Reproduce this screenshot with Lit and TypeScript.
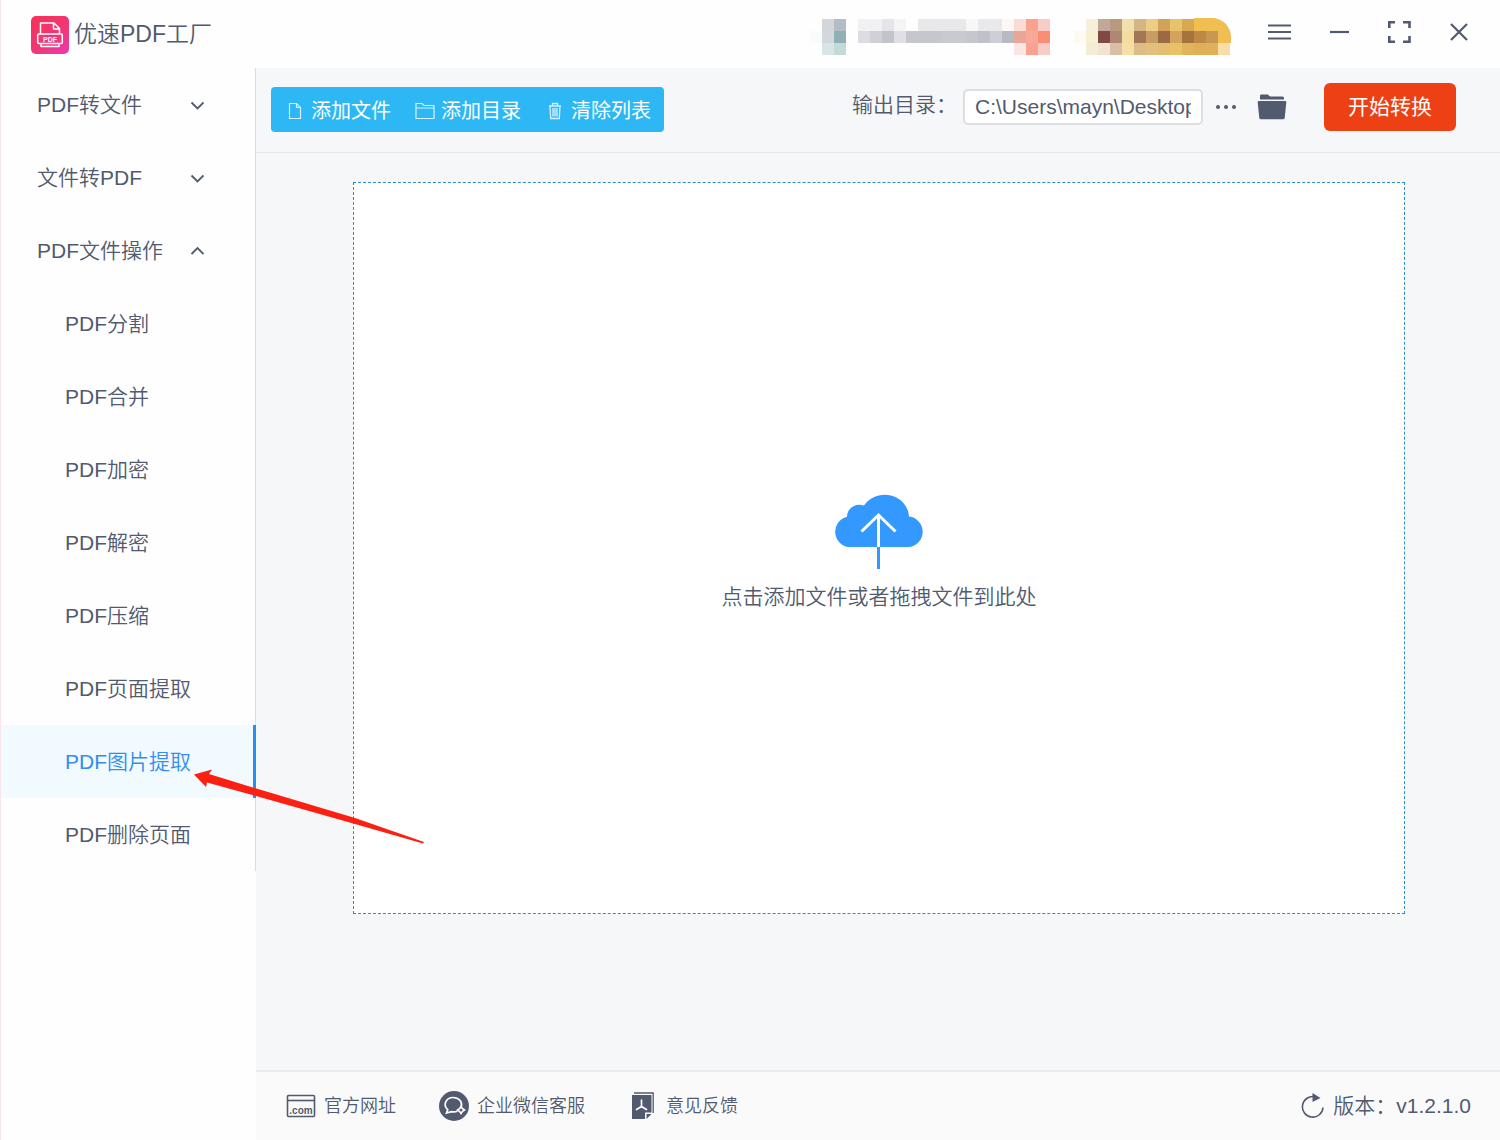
import { LitElement, html, css, svg } from "lit";
import { customElement, state } from "lit/decorators.js";
import { classMap } from "lit/directives/class-map.js";

type Cell = [number, number, number, string];

// Account strip: [x, row, width, colour], each row is 12px tall.
const cells: Cell[] = [
  [0, 1, 12, "#fafbfc"],
  [12, 0, 12, "#d2d7db"], [24, 0, 12, "#b3bec4"],
  [12, 1, 12, "#d3d8dc"], [24, 1, 12, "#90b0b6"],
  [12, 2, 12, "#d6e5e5"], [24, 2, 12, "#c3dad9"],
  [48, 0, 24, "#f1f1f4"], [72, 0, 12, "#e5e5e9"], [84, 0, 12, "#f4f4f6"],
  [108, 0, 48, "#e8e8eb"], [156, 0, 12, "#f7f7f8"], [168, 0, 24, "#e9e9ec"],
  [192, 0, 12, "#fcf8f8"], [204, 0, 12, "#f9dcd6"], [216, 0, 12, "#f9a28d"], [228, 0, 12, "#f8cdc7"],
  [48, 1, 12, "#dcdce1"], [60, 1, 12, "#d0d1d7"], [72, 1, 12, "#c2c4cb"], [84, 1, 12, "#dfdfe4"],
  [96, 1, 36, "#c6c7cd"], [132, 1, 24, "#c9cad0"], [156, 1, 12, "#c6c7cd"], [168, 1, 12, "#c1c2c9"],
  [180, 1, 12, "#cdced6"], [192, 1, 12, "#b8bac3"], [204, 1, 12, "#eaa59a"], [216, 1, 12, "#f7a999"],
  [228, 1, 12, "#f98d75"],
  [204, 2, 12, "#fae6e3"], [216, 2, 12, "#f9a292"], [228, 2, 12, "#f7cbc6"],
  [264, 1, 12, "#fdfaf3"],
  [276, 0, 12, "#f7efdb"], [276, 1, 12, "#f8efd5"], [276, 2, 12, "#f5ecd8"],
  [288, 0, 12, "#c2a898"], [288, 1, 12, "#7d4a44"], [288, 2, 12, "#f2e3d0"],
  [300, 0, 12, "#bb9880"], [300, 1, 12, "#b08674"], [300, 2, 12, "#d9bfa8"],
  [312, 0, 12, "#f3dfaa"], [312, 1, 12, "#f3dca0"], [312, 2, 12, "#f5dfa5"],
  [324, 0, 12, "#d6b585"], [324, 1, 12, "#a37655"], [324, 2, 12, "#dcbc88"],
  [336, 0, 12, "#edcd85"], [336, 1, 12, "#c89d63"], [336, 2, 12, "#e3c07d"],
  [348, 0, 12, "#d2a258"], [348, 1, 12, "#9a6a43"], [348, 2, 12, "#e4bd70"],
  [360, 0, 12, "#e9c36b"], [360, 1, 12, "#d3a35d"], [360, 2, 12, "#e9c167"],
  [372, 0, 12, "#d9a850"], [372, 1, 12, "#a5733e"], [372, 2, 12, "#e1b35b"],
  [384, 1, 12, "#bc8843"], [384, 2, 12, "#e0af58"],
  [396, 1, 12, "#c79851"], [396, 2, 12, "#e1b05a"],
  [408, 2, 12, "#f9dca8"],
];

const chevron = html`<svg width="14" height="14" viewBox="0 0 14 14" aria-hidden="true">
  <path d="M1.500 4.500 7.500 10.500 13.500 4.500" fill="none" stroke="currentColor" stroke-width="1.800" />
</svg>`;

const chevronUp = html`<svg width="14" height="14" viewBox="0 0 14 14" aria-hidden="true">
  <path d="M1.500 10 7.500 4 13.500 10" fill="none" stroke="currentColor" stroke-width="1.800" />
</svg>`;

@customElement("app-root")
export class AppRoot extends LitElement {
  @state() private active = "PDF图片提取";
  @state() private open = "PDF文件操作";

  private groups = [
    { name: "PDF转文件", items: [] as string[] },
    { name: "文件转PDF", items: [] as string[] },
    {
      name: "PDF文件操作",
      items: ["PDF分割", "PDF合并", "PDF加密", "PDF解密", "PDF压缩", "PDF页面提取", "PDF图片提取", "PDF删除页面"],
    },
  ];

  static styles = css`
    :host {
      display: block;
      position: relative;
      color: #515a6e;
      font-family: "Liberation Sans", "Noto Sans CJK SC", sans-serif;
      font-weight: 350;
      font-size: 21px;
      line-height: 30px;
    }
    * { box-sizing: border-box; }
    svg { display: block; flex: none; }
    button, input, a {
      font: inherit;
      color: inherit;
      text-decoration: none;
    }
    button {
      display: flex;
      align-items: center;
      justify-content: center;
      margin: 0;
      padding: 0;
      border: 0;
      background: none;
      white-space: nowrap;
      cursor: pointer;
    }
    .shell {
      display: flex;
      flex-direction: column;
      min-height: 100vh;
      background: #fefeff;
      border-left: 1px solid #f9e6ea;
    }
    .header {
      display: flex;
      align-items: center;
      height: 68px;
      padding: 0 11px 0 30px;
    }
    .brand {
      display: flex;
      align-items: center;
      gap: 5px;
      flex: 1;
      margin: 0;
      font-size: 23px;
      font-weight: inherit;
    }
    .brand svg { margin-top: 2px; }
    .account { margin: 6px 9px 0 0; }
    .window { display: flex; padding-bottom: 4px; }
    .window button { width: 60px; height: 48px; }
    .body { display: flex; flex: 1; }
    .sidebar { flex: 0 0 255px; }
    .row {
      display: flex;
      justify-content: space-between;
      width: 100%;
      height: 73px;
      padding: 0 51px 0 36px;
      border-right: 1px solid #d9dce2;
      align-items: center;
    }
    .sub { padding: 0 0 0 64px; }
    .sub.active {
      color: #348df0;
      background: #f0faff;
      border-right: 3px solid #2d8cf0;
    }
    .main {
      display: flex;
      flex: 1;
      flex-direction: column;
      min-width: 0;
      background: #f5f7f9;
    }
    .toolbar {
      display: flex;
      justify-content: space-between;
      align-items: flex-start;
      padding: 15px 44px 20px 15px;
      border-bottom: 1px solid #e5e7ea;
    }
    .actions {
      display: flex;
      gap: 24px;
      height: 45px;
      margin-top: 4px;
      padding: 2px 13px 0 14px;
      border-radius: 4px;
      background: #2db7f5;
      color: #ffffff;
      font-size: 20px;
      font-weight: 400;
    }
    .actions button { gap: 6px; }
    .output { display: flex; align-items: center; height: 48px; }
    .output label { padding-bottom: 4px; }
    .path {
      width: 240px;
      height: 36px;
      margin-left: 6px;
      padding: 0 10px;
      border: 2px solid #dcdee2;
      border-radius: 5px;
      background: #ffffff;
      outline: none;
    }
    .more { width: 45px; height: 36px; }
    .folder { width: 48px; height: 36px; margin-right: 28px; }
    .start {
      width: 132px;
      height: 48px;
      border-radius: 6px;
      background: #ed4014;
      color: #ffffff;
      font-weight: 400;
    }
    .drop {
      flex: 1;
      flex-direction: column;
      gap: 12px;
      margin: 29px 95px 156px 97px;
      padding-top: 10px;
      border: 1px dashed #2d8cc8;
      background: #ffffff;
    }
    .footer {
      display: flex;
      align-items: center;
      gap: 43px;
      height: 70px;
      padding: 0 29px 0 30px;
      border-top: 2px solid #e9ebee;
      background: #fafafb;
      font-size: 18px;
    }
    .footer a, .version { display: flex; align-items: center; gap: 8px; }
    .version { margin-left: auto; font-size: 21px; }
    .pointer { position: absolute; left: 190px; top: 765px; pointer-events: none; }
  `;

  private renderHeader() {
    return html`<header class="header">
      <h1 class="brand">
        <svg width="38" height="38" viewBox="0 0 38 38" aria-hidden="true">
          <defs>
            <linearGradient id="logo" x1="0.2" y1="0" x2="0.9" y2="1">
              <stop offset="0" stop-color="#f6325d" />
              <stop offset="0.6" stop-color="#f03779" />
              <stop offset="1" stop-color="#e93bb0" />
            </linearGradient>
          </defs>
          <rect width="38" height="38" rx="5" fill="url(#logo)" />
          <g fill="none" stroke="#fff" stroke-width="1.500" stroke-linejoin="round">
            <path d="M9.500 18V7h13.500l5.500 5.500V18M22.500 7v6h6" />
            <rect x="6.700" y="18" width="24.600" height="9.500" rx="1" />
            <path d="M10 27.500v3h18v-3" />
          </g>
          <text x="19" y="25.500" fill="#fff" font-size="7" font-weight="700" text-anchor="middle">PDF</text>
        </svg>
        优速PDF工厂
      </h1>
      <svg class="account" width="430" height="38" viewBox="0 0 430 38" aria-hidden="true">
        <path d="M384 0h18a19 19 0 0 1 19 19v6h-37z" fill="#f0be52" />
        ${cells.map(
          ([x, r, w, c]) => svg`<rect x=${x} y=${r * 12 + 1} width=${w} height="12" fill=${c} shape-rendering="crispEdges" />`
        )}
      </svg>
      <div class="window">
        <button aria-label="菜单">
          <svg width="24" height="24" viewBox="0 0 24 24"><path d="M1 5.500h23M1 12h23M1 18.500h23" stroke="#515a6e" stroke-width="2.200" /></svg>
        </button>
        <button aria-label="最小化">
          <svg width="24" height="24" viewBox="0 0 24 24"><path d="M3 12h19" stroke="#515a6e" stroke-width="2.200" /></svg>
        </button>
        <button aria-label="最大化">
          <svg width="24" height="24" viewBox="0 0 24 24"><path d="M2.300 8V2.300H8M16 2.300h6.500V8M22.500 16v5.800H16M8 21.800H2.300V16" fill="none" stroke="#515a6e" stroke-width="2.600" /></svg>
        </button>
        <button aria-label="关闭">
          <svg width="24" height="24" viewBox="0 0 24 24"><path d="M4 4 20 20M20 4 4 20" stroke="#515a6e" stroke-width="2.200" /></svg>
        </button>
      </div>
    </header>`;
  }

  private renderSidebar() {
    return html`<nav class="sidebar">
      ${this.groups.map((g) => {
        const open = g.name === this.open;
        return html`<button class="row" aria-expanded=${open} @click=${() => (this.open = open ? "" : g.name)}>
            <span>${g.name}</span>${open ? chevronUp : chevron}
          </button>
          ${open
            ? g.items.map(
                (item) => html`<a
                  href="#"
                  class=${classMap({ row: true, sub: true, active: item === this.active })}
                  @click=${(e: Event) => {
                    e.preventDefault();
                    this.active = item;
                  }}
                  >${item}</a
                >`
              )
            : ""}`;
      })}
    </nav>`;
  }

  private renderToolbar() {
    return html`<div class="toolbar">
      <div class="actions">
        <button>
          <svg width="20" height="20" viewBox="0 0 20 20"><path d="M4.500 2.500h7l4 4v11h-11zM11.500 2.500v4h4" fill="none" stroke="#d8f3ff" stroke-width="1.200" /></svg>
          添加文件
        </button>
        <button>
          <svg width="20" height="20" viewBox="0 0 20 20"><path d="M1 17.500v-15h6l2 2h10v13zM1 7h18" fill="none" stroke="#d8f3ff" stroke-width="1.200" /></svg>
          添加目录
        </button>
        <button>
          <svg width="20" height="20" viewBox="0 0 20 20"><path d="M4 5h12M7.500 5V2.500h5V5M5 5l.7 12.500h8.600L15 5M8 7v8.500M10 7v8.500M12 7v8.500" fill="none" stroke="#d8f3ff" stroke-width="1.300" /></svg>
          清除列表
        </button>
      </div>
      <div class="output">
        <label for="path">输出目录：</label>
        <input id="path" class="path" type="text" value="C:\\Users\\mayn\\Desktop" />
        <button class="more" aria-label="更多">
          <svg width="22" height="6" viewBox="0 0 22 6"><g fill="#515a6e"><circle cx="3" cy="3" r="2" /><circle cx="11" cy="3" r="2" /><circle cx="19" cy="3" r="2" /></g></svg>
        </button>
        <button class="folder" aria-label="打开目录">
          <svg width="30" height="26" viewBox="0 0 30 26"><path d="M3 5.500V1.800Q3 .5 4.300.5h6.500L13 2.500h12.500Q27 2.500 27 4v1.500zM2 7h26q1.500 0 1.300 1.500L27.700 24q-.2 1.300-1.500 1.300H3.800q-1.300 0-1.500-1.300L.7 8.500Q.5 7 2 7z" fill="#515a6e" /></svg>
        </button>
        <button class="start">开始转换</button>
      </div>
    </div>`;
  }

  private renderFooter() {
    return html`<footer class="footer">
      <a href="#">
        <svg width="30" height="26" viewBox="0 0 30 26" aria-hidden="true">
          <rect x="1.500" y="2.500" width="27" height="21" rx="1" fill="none" stroke="#515a6e" stroke-width="1.600" />
          <path d="M1.500 7.500h27" stroke="#515a6e" stroke-width="1.600" />
          <text x="15" y="20.500" fill="#515a6e" font-family="Liberation Sans Narrow, Liberation Sans, sans-serif" font-size="10" font-weight="700" text-anchor="middle">.com</text>
        </svg>
        官方网址
      </a>
      <a href="#">
        <svg width="30" height="30" viewBox="0 0 30 30" aria-hidden="true">
          <circle cx="15" cy="15" r="15" fill="#515a6e" />
          <path d="M18.500 20.300q-3 1-6 .4L7.500 22l1.200-3.300C3.500 14 7 6.500 14 6.500c6 0 9.600 4.500 8.300 9" fill="none" stroke="#fff" stroke-width="1.700" />
          <path d="m22 14 2 3 3 2-3 2-2 3-2-3-3-2 3-2z" fill="#fff" />
          <circle cx="22" cy="19" r="1.500" fill="#515a6e" />
        </svg>
        企业微信客服
      </a>
      <a href="#">
        <svg width="30" height="28" viewBox="0 0 30 28" aria-hidden="true">
          <path d="M6 1h19.200V21" fill="none" stroke="#515a6e" stroke-width="1.300" />
          <path d="M4 3h19.500v17.500H17V27H4zM18.500 27v-5h5z" fill="#515a6e" />
          <path d="M13.500 8v6.500M13.500 14.500 8.500 17.500M13.500 14.500l5 3" fill="none" stroke="#fff" stroke-width="1.700" stroke-linecap="round" />
        </svg>
        意见反馈
      </a>
      <div class="version">
        <svg width="24" height="28" viewBox="0 0 24 28" aria-hidden="true">
          <path d="M14 4.800A10.300 10.300 0 1 0 22 15.500" fill="none" stroke="#515a6e" stroke-width="1.600" />
          <path d="M11.500 1v9L19.500 6z" fill="#515a6e" />
        </svg>
        <span>版本：v1.2.1.0</span>
      </div>
    </footer>`;
  }

  render() {
    return html`<div class="shell">
        ${this.renderHeader()}
        <div class="body">
          ${this.renderSidebar()}
          <main class="main">
            ${this.renderToolbar()}
            <button class="drop">
              <svg width="88" height="76" viewBox="0 0 88 76" aria-hidden="true">
                <path d="M15.500 53A15.300 15.300 0 0 1 12 22.800C12 14 21 8.500 29 11.500 41-6.500 72-1.500 74 22.500A15.300 15.300 0 0 1 73 53z" fill="#3399ff" />
                <path d="M43.500 53v22" stroke="#3399ff" stroke-width="3" />
                <path d="M43.500 53V21M26.500 37.500 43.500 21l17 16.500" fill="none" stroke="#fff" stroke-width="3" />
              </svg>
              点击添加文件或者拖拽文件到此处
            </button>
            ${this.renderFooter()}
          </main>
        </div>
      </div>
      <svg class="pointer" width="240" height="84" viewBox="0 0 240 84" aria-hidden="true">
        <path d="M4 9.500 22 4.500 19 9 68 24 165 53 234 77 233 78.500 158 57 66 31 17 17.500 16 22z" fill="#fb2012" />
      </svg>`;
  }
}
